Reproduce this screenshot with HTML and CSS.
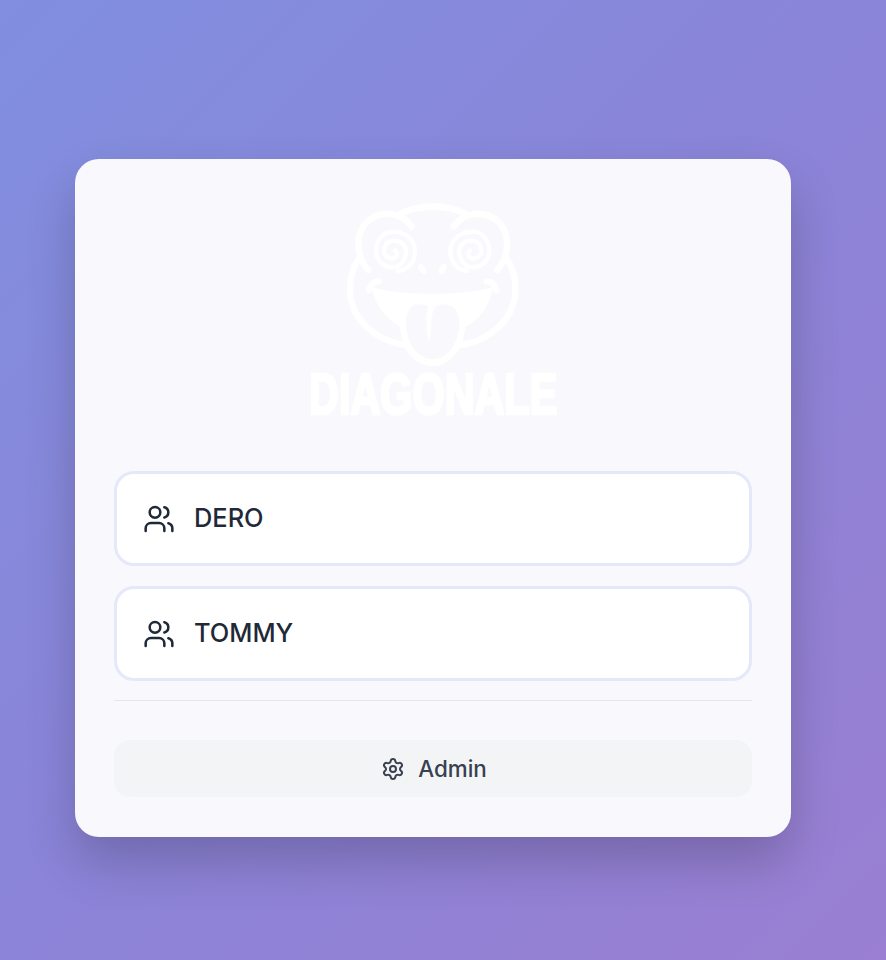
FILE: index.html
```html
<!DOCTYPE html>
<html lang="en">
<head>
<meta charset="utf-8">
<title>Diagonale</title>
<link rel="stylesheet" href="styles.css">
</head>
<body>
<svg class="icon-defs" width="0" height="0" aria-hidden="true">
  <defs>
    <symbol id="users" viewBox="0 0 24 24">
      <path d="M16 21v-2a4 4 0 0 0-4-4H6a4 4 0 0 0-4 4v2"/>
      <path d="M16 3.128a4 4 0 0 1 0 7.744"/>
      <path d="M22 21v-2a4 4 0 0 0-3-3.87"/>
      <circle cx="9" cy="7" r="4"/>
    </symbol>
    <path id="spiral" d="M295 243C330 238 345 210 345 185C345 145 310 125 280 125C245 125 228 155 228 182C228 215 255 232 278 232C305 232 318 205 318 185C318 165 300 150 280 152C262 153 250 168 252 185C254 200 270 207 280 205C290 203 295 190 286 182"/>
  </defs>
</svg>
<main class="page">
  <section class="card">
    <svg class="logo" viewBox="-6 24 810 690" role="img" aria-label="Diagonale">
      <g class="logo-lines">
        <path d="M300 72C360 42 440 42 498 72"/>
        <path d="M335 110C315 82 285 70 255 72C205 76 175 115 175 160C175 195 187 222 205 240"/>
        <path d="M461 110C481 82 511 70 541 72C591 76 621 115 621 160C621 195 609 222 591 240"/>
        <path d="M175 208C155 235 150 270 150 300C150 385 225 450 310 465"/>
        <path d="M621 208C641 235 646 270 646 300C646 385 571 450 486 465"/>
        <path d="M207 300C212 282 222 274 236 274"/>
        <path d="M589 300C584 282 574 274 560 274"/>
        <use href="#spiral" class="spiral"/>
        <use href="#spiral" class="spiral" transform="matrix(-1 0 0 1 796 0)"/>
      </g>
      <ellipse class="logo-fill" cx="367" cy="237" rx="10" ry="17" transform="rotate(-32 367 237)"/>
      <ellipse class="logo-fill" cx="428" cy="237" rx="10" ry="17" transform="rotate(32 428 237)"/>
      <path class="logo-fill" d="M215 290C290 318 505 318 580 290C570 345 540 388 497 410L487 458C465 505 435 528 398 528C360 528 330 505 310 465L298 408C255 385 225 345 215 290Z"/>
      <path class="logo-tongue" d="M318 400C318 365 332 343 355 343C370 343 385 347 385 352C378 375 376 420 388 455C396 420 390 365 408 350C416 344 425 343 432 343C460 343 478 365 478 400C478 460 440 508 398 508C355 508 318 460 318 400Z"/>
      <text class="logo-word" transform="translate(27 671) scale(.714 1)">DIAGONALE</text>
    </svg>
    <div class="teams">
      <button class="team" type="button">
        <svg class="team-icon"><use href="#users"/></svg>
        <span class="team-name">DERO</span>
      </button>
      <button class="team" type="button">
        <svg class="team-icon"><use href="#users"/></svg>
        <span class="team-name">TOMMY</span>
      </button>
    </div>
    <hr class="divider">
    <button class="admin" type="button">
      <svg class="admin-icon" viewBox="0 0 24 24">
        <path d="M9.671 4.136a2.34 2.34 0 0 1 4.659 0 2.34 2.34 0 0 0 3.319 1.915 2.34 2.34 0 0 1 2.33 4.033 2.34 2.34 0 0 0 0 3.831 2.34 2.34 0 0 1-2.33 4.033 2.34 2.34 0 0 0-3.319 1.915 2.34 2.34 0 0 1-4.659 0 2.34 2.34 0 0 0-3.32-1.915 2.34 2.34 0 0 1-2.33-4.033 2.34 2.34 0 0 0 0-3.831A2.34 2.34 0 0 1 6.35 6.051a2.34 2.34 0 0 0 3.319-1.915"/>
        <circle cx="12" cy="12" r="3"/>
      </svg>
      <span>Admin</span>
    </button>
  </section>
</main>
</body>
</html>
```

FILE: styles.css
```css
* {
  box-sizing: border-box;
}

html,
body {
  margin: 0;
  height: 100%;
}

body {
  background: linear-gradient(135deg, #818fe0 0%, #8b84d8 50%, #9a7fd2 100%);
  font-family: Inter, "Liberation Sans", sans-serif;
  overflow: hidden;
}

.icon-defs {
  position: absolute;
}

.page {
  padding: 159px 95px 0 75px;
}

.card {
  display: flex;
  flex-direction: column;
  height: 678px;
  padding: 39px;
  border-radius: 24px;
  background: #f9f9fd;
  box-shadow: 0 25px 50px rgba(0, 0, 0, 0.2);
}

.logo {
  display: block;
  width: 270px;
  height: 230px;
  margin: 0 auto 43px;
}

.logo-lines {
  fill: none;
  stroke: #fff;
  stroke-width: 19;
  stroke-linecap: round;
}

.spiral {
  stroke-width: 13;
}

.logo-fill {
  fill: #fff;
}

.logo-tongue {
  fill: #f9f9fd;
}

.logo-word {
  fill: #fff;
  stroke: #fff;
  stroke-width: 8;
  font-family: "Liberation Sans", Arial, sans-serif;
  font-size: 174px;
  font-weight: 700;
}

.teams {
  display: flex;
  flex-direction: column;
  gap: 20px;
}

.team {
  display: flex;
  align-items: center;
  gap: 19px;
  width: 100%;
  height: 95px;
  padding: 0 26px;
  border: 3px solid #e4e8f9;
  border-radius: 20px;
  background: #fff;
  color: #1f2937;
  font: 450 25.4px Inter, "Liberation Sans", sans-serif;
}

.team-name {
  margin-bottom: 2px;
}

.team-icon {
  width: 32px;
  height: 32px;
  fill: none;
  stroke: currentColor;
  stroke-width: 1.9;
  stroke-linecap: round;
  stroke-linejoin: round;
}

.divider {
  width: 100%;
  height: 1px;
  margin: 19px 0 39px;
  border: 0;
  background: #e5e7eb;
}

.admin {
  display: flex;
  align-items: center;
  justify-content: center;
  gap: 13px;
  width: 100%;
  height: 57px;
  padding: 0 0 0 2px;
  border: 0;
  border-radius: 16px;
  background: #f3f4f6;
  color: #374151;
  font: 450 22.4px Inter, "Liberation Sans", sans-serif;
}

.admin-icon {
  width: 24px;
  height: 24px;
  fill: none;
  stroke: currentColor;
  stroke-width: 2;
  stroke-linecap: round;
  stroke-linejoin: round;
}
```
